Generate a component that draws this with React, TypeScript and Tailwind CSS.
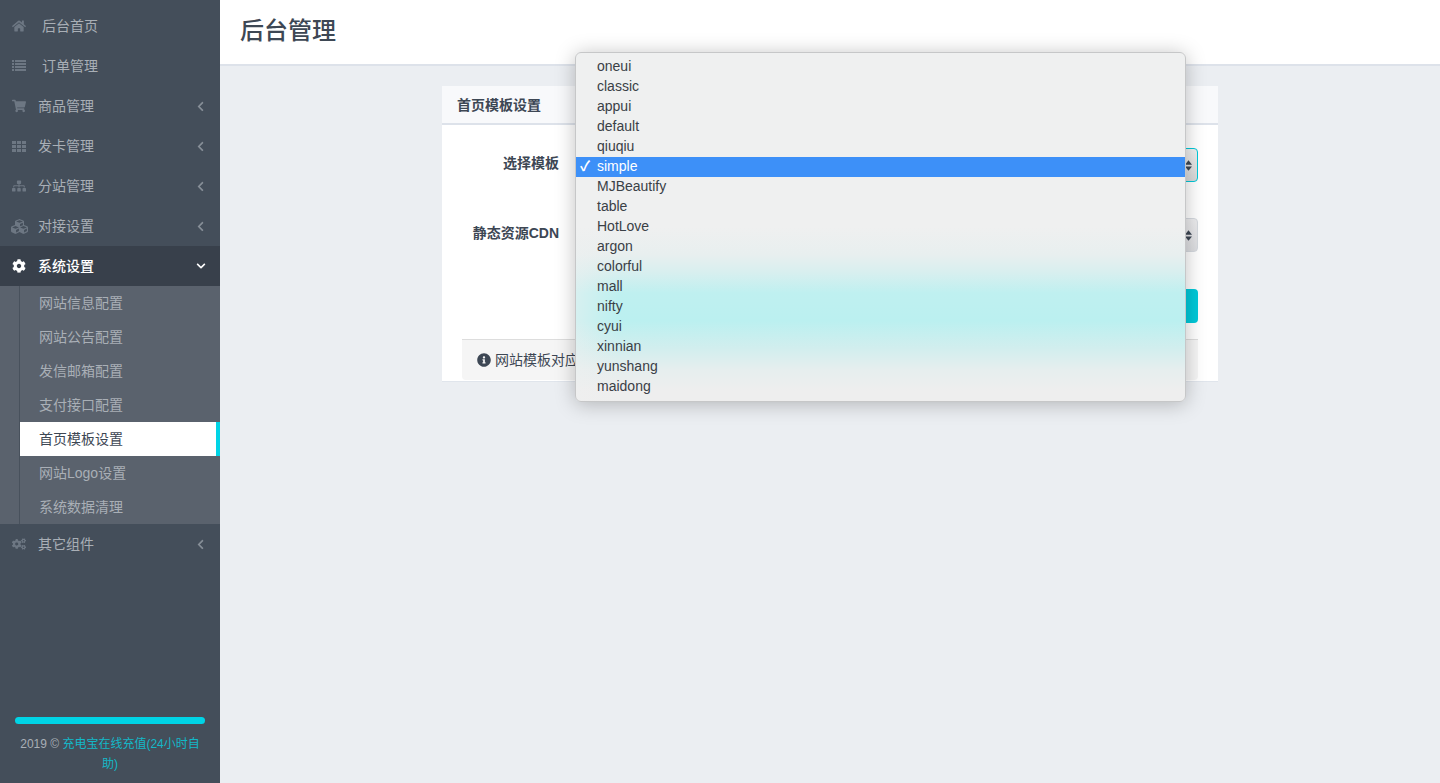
import { FaHome, FaShoppingCart, FaSitemap, FaCubes, FaCog, FaCogs, FaChevronLeft, FaChevronDown, FaInfoCircle } from 'react-icons/fa';

const font = 'font-["Liberation_Sans","Noto_Sans_CJK_SC",sans-serif]';

// fa4 style list, four rows
function ListIcon({ className }: { className?: string }) {
  return (
    <svg viewBox="0 0 14 12" width="14" height="12" fill="currentColor" className={className}>
      {[0, 3, 6, 9].map((y) => (
        <g key={y}>
          <rect x="0" y={y} width="2" height="2" />
          <rect x="3" y={y} width="11" height="2" />
        </g>
      ))}
    </svg>
  );
}

function GridIcon({ className }: { className?: string }) {
  return (
    <svg viewBox="0 0 14 11" width="14" height="11" fill="currentColor" className={className}>
      {[0, 4, 8].map((y) =>
        [0, 5, 10].map((x) => <rect key={`${x}-${y}`} x={x} y={y} width="4" height="3" />),
      )}
    </svg>
  );
}

const topItems = [
  { icon: FaHome, label: '后台首页', indent: 'ml-[16px]' },
  { icon: ListIcon, label: '订单管理', indent: 'ml-[16px]' },
  { icon: FaShoppingCart, label: '商品管理', arrow: true },
  { icon: GridIcon, label: '发卡管理', arrow: true },
  { icon: FaSitemap, label: '分站管理', arrow: true },
  { icon: FaCubes, label: '对接设置', arrow: true },
];

const subItems = ['网站信息配置', '网站公告配置', '发信邮箱配置', '支付接口配置', '首页模板设置', '网站Logo设置', '系统数据清理'];

const templates = ['oneui', 'classic', 'appui', 'default', 'qiuqiu', 'simple', 'MJBeautify', 'table', 'HotLove', 'argon', 'colorful', 'mall', 'nifty', 'cyui', 'xinnian', 'yunshang', 'maidong'];

function NavRow({ icon: Icon, label, arrow, indent, active, iconSize }: { icon: React.ComponentType<{ className?: string }>; label: string; arrow?: boolean; indent?: string; active?: boolean; iconSize?: string }) {
  return (
    <div className={`flex h-10 items-center pl-[12px] pr-[14px] text-sm ${active ? 'bg-[#38404b] font-medium text-white' : 'text-[#a9afb6]'}`}>
      <span className="flex w-[14px] justify-center">
        <Icon className={`shrink-0 ${iconSize ?? 'text-[14px]'} ${active ? 'text-white' : 'text-[#6d7783]'}`} />
      </span>
      <span className={`ml-[12px] ${indent ?? ''}`}>{label}</span>
      {arrow && !active && <FaChevronLeft className="ml-auto text-[11px] text-[#868e97]" />}
      {active && <FaChevronDown className="ml-auto text-[10px] text-white" />}
    </div>
  );
}

function Updown() {
  return (
    <svg width="7" height="13" viewBox="0 0 8 14" className="fill-[#3d4754]">
      <path d="M4 1 L8 6 H0 Z" />
      <path d="M4 13 L8 8 H0 Z" />
    </svg>
  );
}

export default function App() {
  return (
    <div className={`relative flex h-[783px] w-full overflow-hidden bg-[#ebeef2] ${font}`}>
      {/* Sidebar */}
      <aside className="flex w-[220px] shrink-0 flex-col bg-[#444e5a] pt-[6px]">
        {topItems.map((item) => (
          <NavRow key={item.label} {...item} iconSize={item.icon === FaCubes ? 'text-[17px]' : undefined} />
        ))}
        <NavRow icon={FaCog} label="系统设置" active />
        <div className="bg-[#5a626d] pl-[19px]">
          <ul className="border-l border-[#48515c]">
            {subItems.map((label, i) => (
              <li
                key={label}
                className={`flex h-[34px] items-center pl-[19px] text-sm ${i === 4 ? 'border-r-4 border-[#00d4e6] bg-white text-[#3d4754]' : 'text-[#a9afb6]'}`}
              >
                {label}
              </li>
            ))}
          </ul>
        </div>
        <NavRow icon={FaCogs} label="其它组件" arrow />
        <div className="mt-auto px-[15px] pb-[9px]">
          <div className="h-[7px] rounded-full bg-[#00d4e6]" />
          <p className="mt-[10px] text-center text-xs leading-5 text-[#a9afb6]">
            2019 © <span className="text-[#13b8c8]">充电宝在线充值(24小时自助)</span>
          </p>
        </div>
      </aside>

      {/* Main */}
      <main className="flex min-w-0 flex-1 flex-col">
        <header className="flex h-[66px] items-center border-b-2 border-[#dde2ea] bg-white pb-[3px] pl-5">
          <h1 className="text-2xl font-medium text-[#3d4754]">后台管理</h1>
        </header>
        <div className="flex justify-center px-[2px] pt-5">
          <section className="h-[296px] w-[776px] border-b border-[#e0e5ec] bg-white">
            <div className="flex h-[39px] items-center border-b-2 border-[#dde2ea] bg-[#f8f9fb] pl-[15px] text-sm font-bold text-[#3d4754]">
              首页模板设置
            </div>
            <div className="px-5 pt-[23px]">
              <div className="flex h-[34px] items-center">
                <label className="mb-1 w-[97px] text-right text-sm font-bold text-[#3d4754]">选择模板</label>
                <div className="ml-[17px] flex h-[34px] flex-1 items-center justify-end rounded border border-[#00c9d9] bg-[linear-gradient(180deg,#f0f0f0,#d8d8d8)] pr-[5px]">
                  <Updown />
                </div>
              </div>
              <div className="mt-[36px] flex h-[34px] items-center">
                <label className="mb-1 w-[97px] text-right text-sm font-bold text-[#3d4754]">静态资源CDN</label>
                <div className="ml-[17px] flex h-[34px] flex-1 items-center justify-end rounded border border-[#d5d9df] bg-[linear-gradient(180deg,#ececee,#dcdde0)] pr-[5px]">
                  <Updown />
                </div>
              </div>
              <div className="mt-[37px] flex h-[34px]">
                <div className="ml-[114px] flex-1 rounded bg-[#00c9d9]" />
              </div>
              <div className="mt-[16px] flex h-[41px] items-center rounded-b border-t border-[#dddddd] bg-[#f5f5f5] pl-[15px] text-sm text-[#3d4754]">
                <FaInfoCircle className="text-[14px]" />
                <span className="ml-[4px]">网站模板对应</span>
              </div>
            </div>
          </section>
        </div>
      </main>

      {/* Native select popup, drawn open over the form */}
      <ul className="absolute left-[575px] top-[52px] w-[611px] rounded-[6px] border border-[#c6c7c8] bg-[linear-gradient(90deg,rgba(239,240,240,0.5)_0%,rgba(239,240,240,0)_7%),linear-gradient(180deg,#eff0f0_0%,#eff0f0_50%,#e8efef_58%,#d8efef_63%,#bff0f0_69%,#bbf0f0_77%,#d2eeee_85%,#e6eeee_91%,#eeeeee_97%)] py-[4px] text-sm leading-[19px] text-[#3a4046] shadow-[0_2px_20px_rgba(0,0,0,0.25)]">
        {templates.map((name) => (
          <li key={name} className={`relative h-5 pl-[21px] ${name === 'simple' ? 'bg-[#3d90f8] text-white' : ''}`}>
            {name === 'simple' && <span className="absolute left-[4px] top-0 font-bold">✓</span>}
            {name}
          </li>
        ))}
      </ul>
    </div>
  );
}
